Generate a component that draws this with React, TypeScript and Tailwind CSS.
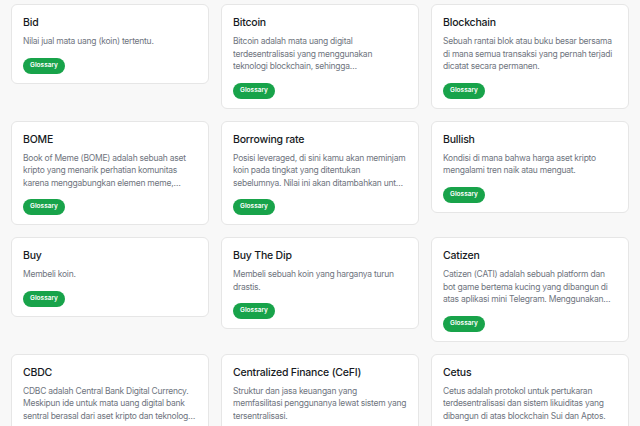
// Glossary grid: term cards with clamped description and a green tag.

type Term = {
  title: string;
  body: string;
};

const TERMS: Term[] = [
  { title: "Bid", body: "Nilai jual mata uang (koin) tertentu." },
  {
    title: "Bitcoin",
    body: "Bitcoin adalah mata uang digital terdesentralisasi yang menggunakan teknologi blockchain, sehingga memungkinkan transaksi tanpa perantara.",
  },
  {
    title: "Blockchain",
    body: "Sebuah rantai blok atau buku besar bersama di mana semua transaksi yang pernah terjadi dicatat secara permanen.",
  },
  {
    title: "BOME",
    body: "Book of Meme (BOME) adalah sebuah aset kripto yang menarik perhatian komunitas karena menggabungkan elemen meme, kebudayaan internet, dan teknologi blockchain.",
  },
  {
    title: "Borrowing rate",
    body: "Posisi leveraged, di sini kamu akan meminjam koin pada tingkat yang ditentukan sebelumnya. Nilai ini akan ditambahkan untuk setiap posisi yang dibuka.",
  },
  {
    title: "Bullish",
    body: "Kondisi di mana bahwa harga aset kripto mengalami tren naik atau menguat.",
  },
  { title: "Buy", body: "Membeli koin." },
  { title: "Buy The Dip", body: "Membeli sebuah koin yang harganya turun drastis." },
  {
    title: "Catizen",
    body: "Catizen (CATI) adalah sebuah platform dan bot game bertema kucing yang dibangun di atas aplikasi mini Telegram. Menggunakan token CATI sebagai mata uang.",
  },
  {
    title: "CBDC",
    body: "CDBC adalah Central Bank Digital Currency. Meskipun ide untuk mata uang digital bank sentral berasal dari aset kripto dan teknologi blockchain, konsepnya berbeda.",
  },
  {
    title: "Centralized Finance (CeFI)",
    body: "Struktur dan jasa keuangan yang memfasilitasi penggunanya lewat sistem yang tersentralisasi.",
  },
  {
    title: "Cetus",
    body: "Cetus adalah protokol untuk pertukaran terdesentralisasi dan sistem likuiditas yang dibangun di atas blockchain Sui dan Aptos.",
  },
];

export default function App() {
  return (
    <div
      className="min-h-screen bg-[#f8f8f8] px-[11px] pt-1 pb-6"
      style={{ fontFamily: "Inter, 'Noto Sans', sans-serif" }}
    >
      <div className="grid grid-cols-3 items-start gap-3">
        {TERMS.map((t) => (
          <TermCard key={t.title} term={t} />
        ))}
      </div>
    </div>
  );
}

function TermCard({ term }: { term: Term }) {
  return (
    <div className="rounded-md border border-[#e6e6e6] bg-white px-[11px] pt-[10px] pb-[9px]">
      <h3 className="text-[10.5px] leading-[15px] font-medium tracking-[-0.2px] text-[#161a23]">
        {term.title}
      </h3>
      <p className="mt-[5px] line-clamp-3 text-[8.5px] leading-[12.5px] tracking-[-0.25px] text-[#6f7580]">
        {term.body}
      </p>
      <span className="mt-[10px] flex h-4 w-[42px] items-center justify-center rounded-full bg-[#18a34a] text-[6.5px] font-semibold text-white">
        Glossary
      </span>
    </div>
  );
}
